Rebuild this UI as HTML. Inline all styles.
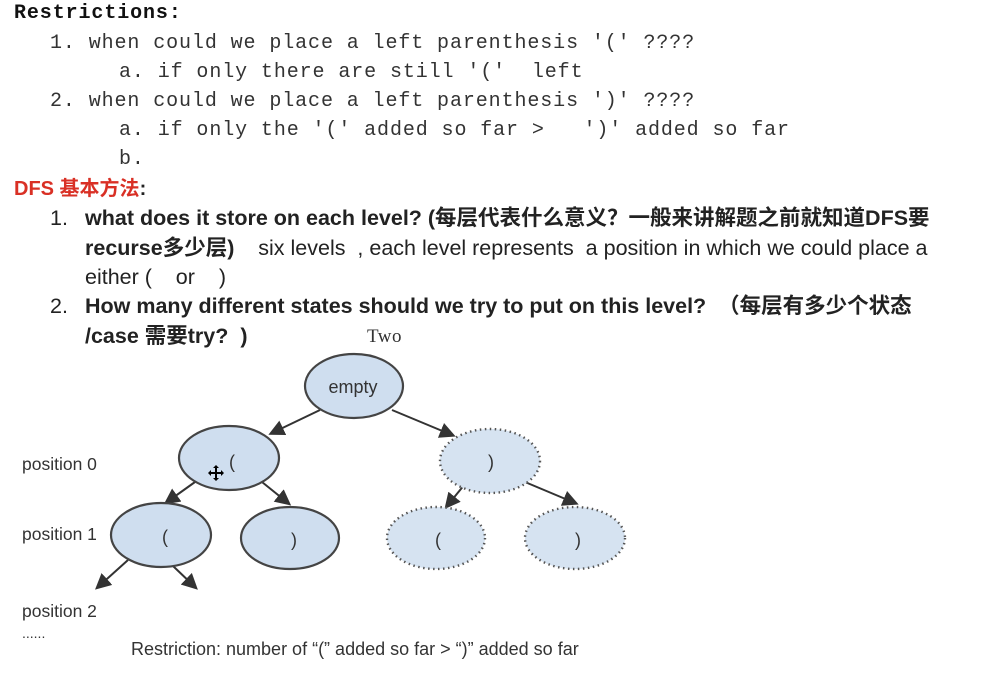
<!DOCTYPE html>
<html><head><meta charset="utf-8"><style>
body{margin:0;width:985px;height:681px;background:#fff;position:relative;overflow:hidden}
.m{position:absolute;font-family:"Liberation Mono",monospace;font-size:20px;letter-spacing:0.9px;color:#333;white-space:pre;line-height:20px}
.s{position:absolute;font-family:"Liberation Sans","Noto Sans CJK SC",sans-serif;font-size:21.5px;color:#222;white-space:pre;line-height:24px}
.b{font-weight:bold}
</style></head><body>
<div class="m b" style="left:14px;top:4px;color:#111">Restrictions:</div>
<div class="m" style="left:50px;top:34px">1. when could we place a left parenthesis '(' ????</div>
<div class="m" style="left:119px;top:63px">a. if only there are still '('  left</div>
<div class="m" style="left:50px;top:92px">2. when could we place a left parenthesis ')' ????</div>
<div class="m" style="left:119px;top:121px">a. if only the '(' added so far >   ')' added so far</div>
<div class="m" style="left:119px;top:150px">b.</div>
<div class="s b" style="left:14px;top:177px;color:#d93025;font-size:20px">DFS 基本方法<span style="color:#222">:</span></div>
<div class="s" style="left:50px;top:206px">1.</div>
<div class="s b" style="left:85px;top:206px">what does it store on each level? (每层代表什么意义？一般来讲解题之前就知道DFS要</div>
<div class="s" style="left:85px;top:236px"><b>recurse多少层)</b>    six levels  , each level represents  a position in which we could place a</div>
<div class="s" style="left:85px;top:265px">either (    or    )</div>
<div class="s" style="left:50px;top:294px">2.</div>
<div class="s b" style="left:85px;top:294px">How many different states should we try to put on this level?  （每层有多少个状态</div>
<div class="s b" style="left:85px;top:324px">/case 需要try?  )</div>
<div class="m" style="left:367px;top:327px;font-size:19px;letter-spacing:0.5px;font-family:'Liberation Serif',serif">Two</div>
<svg style="position:absolute;left:0;top:0" width="985" height="681">
<defs><marker id="a" markerWidth="8" markerHeight="8" refX="6" refY="4" orient="auto"><path d="M0,0 L8,4 L0,8 z" fill="#333"/></marker></defs>
<g stroke="#333" stroke-width="2" marker-end="url(#a)">
<line x1="320" y1="410" x2="272" y2="433"/>
<line x1="392" y1="410" x2="452" y2="435"/>
<line x1="195" y1="482" x2="167" y2="502"/>
<line x1="262" y1="482" x2="288" y2="503"/>
<line x1="465" y1="484" x2="447" y2="506"/>
<line x1="525" y1="482" x2="575" y2="503"/>
<line x1="128" y1="560" x2="98" y2="587"/>
<line x1="173" y1="566" x2="195" y2="587"/>
</g>
<g fill="#cfdeef" stroke="#444" stroke-width="2.2">
<ellipse cx="354" cy="386" rx="49" ry="32"/>
<ellipse cx="229" cy="458" rx="50" ry="32"/>
<ellipse cx="161" cy="535" rx="50" ry="32"/>
<ellipse cx="290" cy="538" rx="49" ry="31"/>
</g>
<g fill="#d6e3f1" stroke="#555" stroke-width="2.4" stroke-dasharray="1.5 3.5">
<ellipse cx="490" cy="461" rx="50" ry="32"/>
<ellipse cx="436" cy="538" rx="49" ry="31"/>
<ellipse cx="575" cy="538" rx="50" ry="31"/>
</g>
<g font-family="Liberation Sans,sans-serif" font-size="18" fill="#333" text-anchor="middle">
<text x="353" y="393">empty</text>
<text x="232" y="468">(</text>
<text x="491" y="468">)</text>
<text x="165" y="543">(</text>
<text x="294" y="546">)</text>
<text x="438" y="546">(</text>
<text x="578" y="546">)</text>
</g>
<g font-family="Liberation Sans,sans-serif" font-size="17.5" fill="#333">
<text x="22" y="470">position 0</text>
<text x="22" y="540">position 1</text>
<text x="22" y="617">position 2</text>
<text x="22" y="638" font-size="14">......</text>
<text x="131" y="655" font-size="18">Restriction: number of “(” added so far &gt; “)” added so far</text>
</g>
<g fill="#000"><path d="M216,465 l-3,3 h2 v4 h-4 v-2 l-3,3 l3,3 v-2 h4 v4 h-2 l3,3 l3,-3 h-2 v-4 h4 v2 l3,-3 l-3,-3 v2 h-4 v-4 h2 z"/></g>
</svg>
</body></html>
